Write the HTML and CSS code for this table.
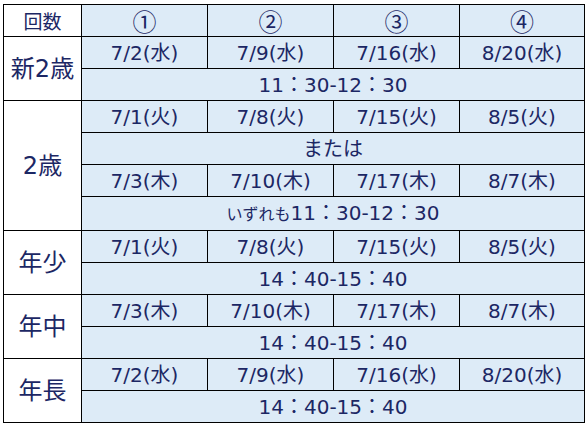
FILE: index.html
```html
<!DOCTYPE html>
<html lang="ja">
<head>
<meta charset="utf-8">
<link rel="stylesheet" href="styles.css">
</head>
<body>
<table class="sched">
  <colgroup>
    <col class="c-label"><col class="c-day"><col class="c-day"><col class="c-day"><col class="c-day4">
  </colgroup>
  <tr class="head">
    <td class="label small">回数</td><td>①</td><td>②</td><td>③</td><td>④</td>
  </tr>
  <tr>
    <td class="label" rowspan="2">新2歳</td><td>7/2(水)</td><td>7/9(水)</td><td>7/16(水)</td><td>8/20(水)</td>
  </tr>
  <tr><td colspan="4">11：30-12：30</td></tr>
  <tr>
    <td class="label" rowspan="4">2歳</td><td>7/1(火)</td><td>7/8(火)</td><td>7/15(火)</td><td>8/5(火)</td>
  </tr>
  <tr><td colspan="4" class="note">または</td></tr>
  <tr><td>7/3(木)</td><td>7/10(木)</td><td>7/17(木)</td><td>8/7(木)</td></tr>
  <tr><td colspan="4"><span class="note">いずれも</span>11：30-12：30</td></tr>
  <tr>
    <td class="label" rowspan="2">年少</td><td>7/1(火)</td><td>7/8(火)</td><td>7/15(火)</td><td>8/5(火)</td>
  </tr>
  <tr><td colspan="4">14：40-15：40</td></tr>
  <tr>
    <td class="label" rowspan="2">年中</td><td>7/3(木)</td><td>7/10(木)</td><td>7/17(木)</td><td>8/7(木)</td>
  </tr>
  <tr><td colspan="4">14：40-15：40</td></tr>
  <tr>
    <td class="label" rowspan="2">年長</td><td>7/2(水)</td><td>7/9(水)</td><td>7/16(水)</td><td>8/20(水)</td>
  </tr>
  <tr><td colspan="4">14：40-15：40</td></tr>
</table>
</body>
</html>
```
FILE: styles.css
```css
html, body {
  margin: 0;
  background: #ffffff;
}
body {
  padding: 4px 0 0 3px;
  font-family: "DejaVu Sans", "Noto Sans CJK JP", sans-serif;
  font-weight: 400;
  color: #1c2764;
}
.sched {
  border-collapse: collapse;
  table-layout: fixed;
  width: 582px;
}
.c-label { width: 78px; }
.c-day { width: 126px; }
.c-day4 { width: 125px; }
.sched td {
  border: 1px solid #000;
  background: #ddebf7;
  height: 30px;
  padding: 1px 0 0;
  text-align: center;
  vertical-align: middle;
  font-size: 20px;
  line-height: 30px;
  white-space: nowrap;
  overflow: hidden;
}
.sched td.label {
  background: #ffffff;
  font-size: 24px;
  padding: 0;
}
.sched .head td {
  font-size: 24px;
  font-family: "Noto Sans CJK JP", sans-serif;
  font-weight: 400;
  padding: 0;
  line-height: 31px;
}
.sched .head td.label.small {
  font-size: 19px;
}
.note {
  font-size: 16px;
}
```
